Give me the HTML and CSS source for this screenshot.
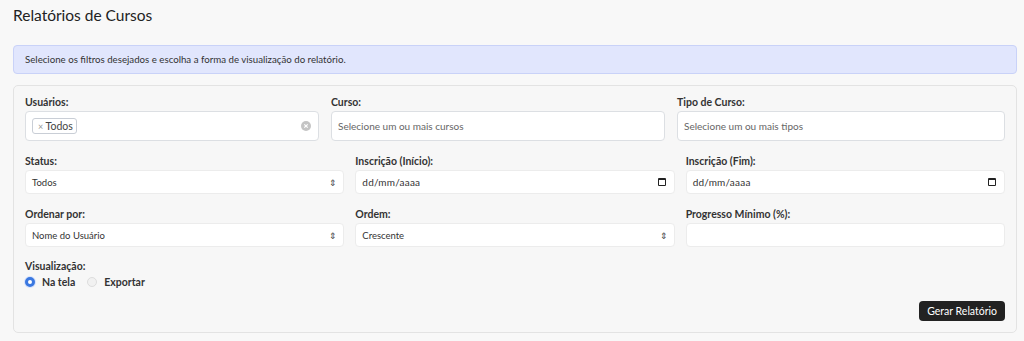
FILE: index.html
```html
<!DOCTYPE html>
<html lang="pt-BR">
<head>
  <meta charset="UTF-8">
  <meta name="viewport" content="width=device-width, initial-scale=1.0">
  <title>Relatórios de Cursos</title>
  <link rel="stylesheet" href="styles.css">
</head>
<body>
  <div class="page">
    <h1>Relatórios de Cursos</h1>

    <div class="alert">Selecione os filtros desejados e escolha a forma de visualização do relatório.</div>

    <div class="card">
      <div class="row row-top">
        <div class="field">
          <label>Usuários:</label>
          <div class="multi">
            <span class="tag"><span class="tag-x">×</span> Todos</span>
            <span class="clear">
              <svg width="10" height="10" viewBox="0 0 10 10"><circle cx="5" cy="5" r="5" fill="#c4c4c4"/><path d="M3.3 3.3l3.4 3.4M6.7 3.3l-3.4 3.4" stroke="#fff" stroke-width="1.2"/></svg>
            </span>
          </div>
        </div>
        <div class="field">
          <label>Curso:</label>
          <div class="multi"><span class="placeholder">Selecione um ou mais cursos</span></div>
        </div>
        <div class="field">
          <label>Tipo de Curso:</label>
          <div class="multi"><span class="placeholder">Selecione um ou mais tipos</span></div>
        </div>
      </div>

      <div class="row">
        <div class="field">
          <label>Status:</label>
          <div class="select"><span>Todos</span><span class="arrows">&#8661;</span></div>
        </div>
        <div class="field">
          <label>Inscrição (Início):</label>
          <div class="select"><span class="date">dd/mm/aaaa</span><span class="cal"></span></div>
        </div>
        <div class="field">
          <label>Inscrição (Fim):</label>
          <div class="select"><span class="date">dd/mm/aaaa</span><span class="cal"></span></div>
        </div>
      </div>

      <div class="row row-last">
        <div class="field">
          <label>Ordenar por:</label>
          <div class="select"><span>Nome do Usuário</span><span class="arrows">&#8661;</span></div>
        </div>
        <div class="field">
          <label>Ordem:</label>
          <div class="select"><span>Crescente</span><span class="arrows">&#8661;</span></div>
        </div>
        <div class="field">
          <label>Progresso Mínimo (%):</label>
          <div class="select"></div>
        </div>
      </div>

      <div class="field view">
        <label>Visualização:</label>
        <div class="radios">
          <span class="radio"><span class="dot checked"></span>Na tela</span>
          <span class="radio"><span class="dot"></span>Exportar</span>
        </div>
      </div>

      <div class="actions">
        <button>Gerar Relatório</button>
      </div>
    </div>
  </div>
</body>
</html>
```

FILE: styles.css
```css
* {
  margin: 0;
  padding: 0;
  box-sizing: border-box;
}

body {
  font-family: 'Lato', 'Noto Sans', sans-serif;
  background: #f8f8f8;
  color: #333;
}

.page {
  padding: 4px 7px 0 13px;
}

h1 {
  font-size: 15.5px;
  font-weight: 400;
  color: #222;
  height: 41px;
  line-height: 22px;
}

.alert {
  background: #e1e6fd;
  border: 1px solid #c9d2f8;
  border-radius: 4px;
  height: 29px;
  padding: 0 11px;
  font-size: 9.7px;
  line-height: 27px;
  color: #333;
  margin-bottom: 11px;
}

.card {
  background: #f7f7f7;
  border: 1px solid #e3e3e3;
  border-radius: 5px;
  padding: 10px 11px 11px 11px;
}

.row {
  display: grid;
  grid-template-columns: 1fr 1fr 1fr;
  gap: 11px;
  margin-bottom: 14px;
}

.row-top {
  grid-template-columns: 294fr 334fr 328fr;
  gap: 12px;
  margin-bottom: 14px;
}

.row-last {
  margin-bottom: 13px;
}

.field label {
  display: block;
  font-size: 10.5px;
  font-weight: 700;
  color: #333;
  margin-bottom: 3px;
}

.multi {
  height: 30px;
  background: #fff;
  border: 1px solid #dcdfe3;
  border-radius: 4px;
  display: flex;
  align-items: center;
  padding: 0 6px;
  font-size: 10px;
  position: relative;
}

.placeholder {
  color: #666;
}

.tag {
  border: 1px solid #c9ced6;
  border-radius: 3px;
  padding: 1px 3px 1px 5px;
  font-size: 10.5px;
  color: #444;
}

.tag-x {
  color: #999;
  font-size: 9px;
}

.clear {
  position: absolute;
  right: 7px;
  top: 9px;
  display: flex;
}

.select {
  height: 24px;
  background: #fff;
  border: 1px solid #ececec;
  border-radius: 4px;
  display: flex;
  align-items: center;
  justify-content: space-between;
  padding: 0 6px;
  font-size: 9.5px;
  color: #333;
}

.arrows {
  font-size: 9px;
  color: #444;
}

.date {
  font-size: 10px;
  letter-spacing: 0.2px;
}

.cal {
  width: 8px;
  height: 8px;
  border: 1px solid #222;
  border-top-width: 2px;
  border-radius: 1px;
  margin-right: 2px;
}

.view label {
  margin-bottom: 4px;
}

.radios {
  display: flex;
  gap: 12px;
  font-size: 10.5px;
  font-weight: 700;
  color: #333;
}

.radio {
  display: flex;
  align-items: center;
  gap: 7px;
}

.dot {
  width: 10px;
  height: 10px;
  border-radius: 50%;
  border: 1px solid #ddd;
  background: #f1f1f1;
}

.dot.checked {
  border: 3px solid #3b78e0;
  background: #fff;
  box-shadow: 0 0 0 1px #d6e2fb;
}

.actions {
  display: flex;
  justify-content: flex-end;
  margin-top: 13px;
}

button {
  background: #222;
  color: #fff;
  border: none;
  border-radius: 4px;
  font-family: inherit;
  font-size: 10.5px;
  padding: 0 8px;
  height: 20px;
}
```
